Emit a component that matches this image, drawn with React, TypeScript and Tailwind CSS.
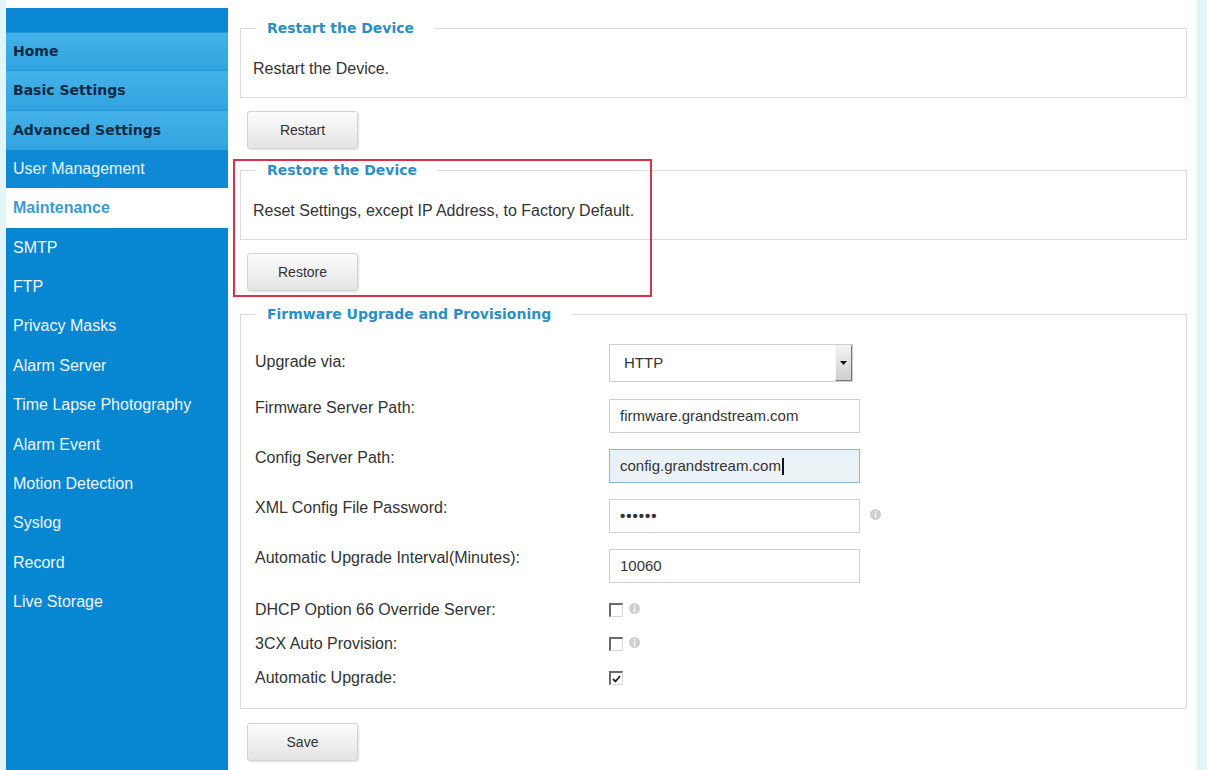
import type { ReactNode } from "react";

const topNav = ["Home", "Basic Settings", "Advanced Settings"];
const subNav = [
  "SMTP",
  "FTP",
  "Privacy Masks",
  "Alarm Server",
  "Time Lapse Photography",
  "Alarm Event",
  "Motion Detection",
  "Syslog",
  "Record",
  "Live Storage",
];

function Box(props: { title: string; children: ReactNode; className?: string }) {
  return (
    <fieldset className={"border border-[#dcdcdc] " + (props.className ?? "")}>
      <legend className="ml-[15px] pl-[11px] pr-[20px] font-['DejaVu_Sans',sans-serif] text-[14px] font-bold leading-[18px] text-[#2b8fc5]">
        {props.title}
      </legend>
      {props.children}
    </fieldset>
  );
}

function Button(props: { label: string; className?: string }) {
  return (
    <button className={"ml-[7px] flex h-[38px] w-[111px] items-center justify-center rounded-[3px] border border-[#d2d2d2] bg-gradient-to-b from-[#fcfcfc] to-[#e4e4e4] text-[14px] text-[#333] shadow-[1px_1px_2px_rgba(0,0,0,0.12)] " + (props.className ?? "")}>
      {props.label}
    </button>
  );
}

function Info() {
  return (
    <svg width="11" height="11" viewBox="0 0 11 11" className="shrink-0">
      <circle cx="5.5" cy="5.5" r="5.5" fill="#cfcfcf" />
      <rect x="4.8" y="2" width="1.4" height="1.4" fill="#fff" />
      <rect x="4.8" y="4.3" width="1.4" height="4.5" fill="#fff" />
    </svg>
  );
}

function Check(props: { checked?: boolean }) {
  return (
    <span className="flex h-[14px] w-[14px] items-center justify-center border-t-2 border-l-2 border-r border-b border-t-[#6a6a6a] border-l-[#6a6a6a] border-r-[#d8d8d8] border-b-[#d8d8d8] bg-white">
      {props.checked && (
        <svg width="9" height="8" viewBox="0 0 9 8">
          <path d="M1 4 L3.5 6.5 L8 1" stroke="#222" strokeWidth="1.8" fill="none" />
        </svg>
      )}
    </span>
  );
}

function Row(props: { label: string; children: ReactNode; h: string; labelTop: string }) {
  return (
    <div className={"flex items-start " + props.h}>
      <div className={"w-[368px] pl-[14px] text-[16px] leading-[18px] text-[#333] " + props.labelTop}>{props.label}</div>
      {props.children}
    </div>
  );
}

const input =
  "h-[34px] w-[251px] border border-[#cfcfcf] bg-white pl-[10px] text-[15px] leading-[32px] text-[#333]";

export default function App() {
  return (
    <div className="flex h-[770px] w-[1207px] overflow-hidden bg-white font-['Liberation_Sans',Arial,sans-serif] text-[#333]">
      <div className="w-[6px] shrink-0 bg-[#e2f6fa]" />

      {/* side menu */}
      <aside className="flex w-[222px] shrink-0 flex-col pt-[8px]">
        <div className="h-[24px] bg-[#0a87d3]" />
        {topNav.map((t, i) => (
          <div
            key={t}
            className={
              "flex items-center border-t border-[#2596d6] bg-gradient-to-b from-[#44b2ea] to-[#30a3df] pl-[7px] font-['DejaVu_Sans',sans-serif] text-[14px] font-bold text-[#0f2a44] " +
              (i === 0 ? "h-[38px]" : "h-[40px]")
            }
          >
            {t}
          </div>
        ))}
        <div className="flex h-[38px] items-center bg-[#0d89d5] pl-[7px] text-[16px] text-[#e6f3fb]">User Management</div>
        <div className="flex h-[40px] items-center bg-white pl-[7px] text-[16px] font-bold text-[#3a9acf]">Maintenance</div>
        <div className="flex-1 bg-[#0786d2]">
          {subNav.map((t) => (
            <div key={t} className="flex h-[39.4px] items-center pl-[7px] text-[16px] text-[#eef7fc]">
              {t}
            </div>
          ))}
        </div>
      </aside>

      {/* content */}
      <main className="relative w-[959px] shrink-0 pl-[12px] pt-[19px]">
        <Box title="Restart the Device" className="pt-[24px] pb-[20px]">
          <p className="pl-[12px] text-[16px] leading-[16px]">Restart the Device.</p>
        </Box>
        <Button label="Restart" className="mt-[13px]" />

        <Box title="Restore the Device" className="mt-[12px] pt-[24px] pb-[20px]">
          <p className="pl-[12px] text-[16px] leading-[16px]">Reset Settings, except IP Address, to Factory Default.</p>
        </Box>
        <Button label="Restore" className="mt-[13px]" />

        <Box title="Firmware Upgrade and Provisioning" className="mt-[14px] pt-[21px] pb-[11px]">
          <Row label="Upgrade via:" h="h-[55px]" labelTop="mt-[9px]">
            <div className="flex h-[38px] w-[244px] items-center justify-between border border-[#cfcfcf] bg-white pl-[14px]">
              <span className="text-[15px]">HTTP</span>
              <span className="flex h-[36px] w-[17px] items-center justify-center border-t border-l border-[#f4f4f4] border-r border-b border-r-[#777] border-b-[#777] bg-gradient-to-b from-[#f2f2f2] to-[#cfcfcf]">
                <svg width="7" height="4" viewBox="0 0 7 4">
                  <path d="M0 0 H7 L3.5 4 Z" fill="#111" />
                </svg>
              </span>
            </div>
          </Row>
          <Row label="Firmware Server Path:" h="h-[50px]" labelTop="mt-0">
            <div className={input}>firmware.grandstream.com</div>
          </Row>
          <Row label="Config Server Path:" h="h-[50px]" labelTop="mt-0">
            <div className="flex h-[34px] w-[251px] items-center border border-[#8fb8cc] bg-[#ebf2f6] pl-[10px] text-[15px] text-[#333]">
              config.grandstream.com
              <span className="ml-[1px] h-[17px] w-[2px] bg-[#111]" />
            </div>
          </Row>
          <Row label="XML Config File Password:" h="h-[50px]" labelTop="mt-0">
            <div className={input + " flex items-center font-bold tracking-[1px]"}>••••••</div>
            <div className="ml-[10px] mt-[10px]">
              <Info />
            </div>
          </Row>
          <Row label="Automatic Upgrade Interval(Minutes):" h="h-[46px]" labelTop="mt-0">
            <div className={input}>10060</div>
          </Row>
          <Row label="DHCP Option 66 Override Server:" h="h-[34px]" labelTop="mt-[6px]">
            <div className="mt-[8px] flex items-start gap-[6px]">
              <Check />
              <Info />
            </div>
          </Row>
          <Row label="3CX Auto Provision:" h="h-[34px]" labelTop="mt-[6px]">
            <div className="mt-[8px] flex items-start gap-[6px]">
              <Check />
              <Info />
            </div>
          </Row>
          <Row label="Automatic Upgrade:" h="h-[34px]" labelTop="mt-[6px]">
            <div className="mt-[8px] flex items-start gap-[6px]">
              <Check checked />
            </div>
          </Row>
        </Box>
        <Button label="Save" className="mt-[14px]" />

        {/* highlight marker */}
        <div className="absolute left-[5px] top-[159px] h-[138px] w-[419px] border-2 border-[#d8334a]" />
      </main>

      <div className="flex-1" />
      <div className="w-[10px] shrink-0 bg-[#e2f6fa]" />
    </div>
  );
}
